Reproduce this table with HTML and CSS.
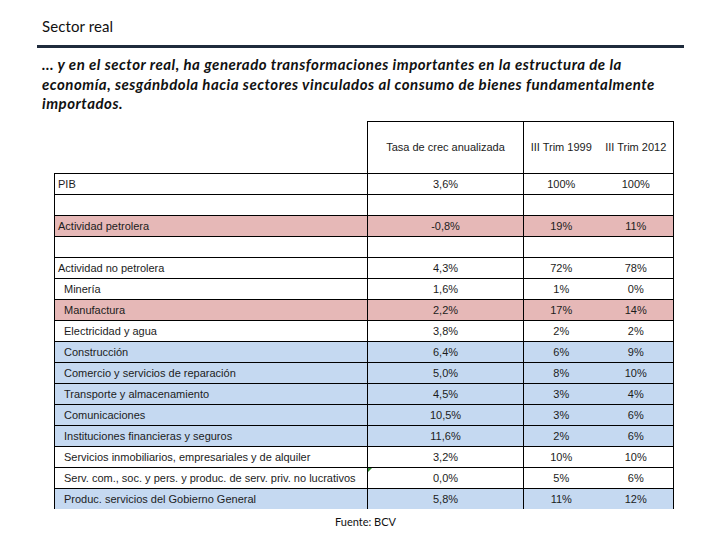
FILE: index.html
```html
<!DOCTYPE html>
<html lang="es">
<head>
<meta charset="utf-8">
<title>Sector real</title>
<link rel="stylesheet" href="styles.css">
</head>
<body>
<h1 class="title">Sector real</h1>
<div class="rule"></div>
<p class="lead">… y en el sector real, ha generado transformaciones importantes en la estructura de la economía, sesgánbdola hacia sectores vinculados al consumo de bienes fundamentalmente importados.</p>
<table class="data">
  <colgroup>
    <col class="c-label"><col class="c-tasa"><col class="c-y"><col class="c-y">
  </colgroup>
  <tr class="head">
    <td class="blank"></td>
    <td class="h-tasa">Tasa de crec anualizada</td>
    <td class="h-y1">III Trim 1999</td>
    <td class="h-y2">III Trim 2012</td>
  </tr>
  <tr class="main"><td class="lbl">PIB</td><td>3,6%</td><td class="y1">100%</td><td class="y2">100%</td></tr>
  <tr class="empty"><td></td><td></td><td class="y1"></td><td class="y2"></td></tr>
  <tr class="main pink"><td class="lbl">Actividad petrolera</td><td>-0,8%</td><td class="y1">19%</td><td class="y2">11%</td></tr>
  <tr class="empty"><td></td><td></td><td class="y1"></td><td class="y2"></td></tr>
  <tr class="main"><td class="lbl">Actividad no petrolera</td><td>4,3%</td><td class="y1">72%</td><td class="y2">78%</td></tr>
  <tr class="sub"><td class="lbl">Minería</td><td>1,6%</td><td class="y1">1%</td><td class="y2">0%</td></tr>
  <tr class="sub pink"><td class="lbl">Manufactura</td><td>2,2%</td><td class="y1">17%</td><td class="y2">14%</td></tr>
  <tr class="sub"><td class="lbl">Electricidad y agua</td><td>3,8%</td><td class="y1">2%</td><td class="y2">2%</td></tr>
  <tr class="sub blue"><td class="lbl">Construcción</td><td>6,4%</td><td class="y1">6%</td><td class="y2">9%</td></tr>
  <tr class="sub blue"><td class="lbl">Comercio y servicios de reparación</td><td>5,0%</td><td class="y1">8%</td><td class="y2">10%</td></tr>
  <tr class="sub blue"><td class="lbl">Transporte y almacenamiento</td><td>4,5%</td><td class="y1">3%</td><td class="y2">4%</td></tr>
  <tr class="sub blue"><td class="lbl">Comunicaciones</td><td>10,5%</td><td class="y1">3%</td><td class="y2">6%</td></tr>
  <tr class="sub blue"><td class="lbl">Instituciones financieras y seguros</td><td>11,6%</td><td class="y1">2%</td><td class="y2">6%</td></tr>
  <tr class="sub"><td class="lbl">Servicios inmobiliarios, empresariales y de alquiler</td><td>3,2%</td><td class="y1">10%</td><td class="y2">10%</td></tr>
  <tr class="sub"><td class="lbl">Serv. com., soc. y pers. y produc. de serv. priv. no lucrativos</td><td class="flag">0,0%</td><td class="y1">5%</td><td class="y2">6%</td></tr>
  <tr class="sub blue last"><td class="lbl">Produc. servicios del Gobierno General</td><td>5,8%</td><td class="y1">11%</td><td class="y2">12%</td></tr>
</table>
<p class="source">Fuente: BCV</p>
</body>
</html>
```
FILE: styles.css
```css
html, body {
  margin: 0;
  padding: 0;
  background: #fff;
}

body {
  width: 720px;
  height: 540px;
  overflow: hidden;
  font-family: "Lato", "Open Sans", sans-serif;
  color: #111;
}

.title {
  margin: 17px 0 0 42px;
  font-size: 15px;
  line-height: 18px;
  font-weight: normal;
  letter-spacing: 0.1px;
  color: #111;
}

.rule {
  margin: 10px 0 0 37px;
  width: 647px;
  height: 3px;
  background: #1f2b3c;
}

.lead {
  margin: 7px 0 0 42px;
  width: 640px;
  font-size: 15px;
  line-height: 19.5px;
  letter-spacing: 0.5px;
  font-style: italic;
  font-weight: bold;
  color: #111;
}

.data {
  margin: 7px 0 0 54px;
  border-collapse: collapse;
  table-layout: fixed;
  width: 620px;
  font-family: "Liberation Sans", Arial, sans-serif;
  font-size: 11px;
  color: #1c1c1c;
}

.c-label { width: 313px; }
.c-tasa { width: 156px; }
.c-y { width: 75px; }

.data td {
  height: 20px;
  padding: 0;
  border: 1px solid #000;
  text-align: center;
  line-height: 12px;
  white-space: nowrap;
  overflow: hidden;
}

.data td.y1 { border-right: none; }
.data td.y2 { border-left: none; }

.data .head td {
  height: 51px;
  padding-top: 0;
}

.data .head td.blank {
  border-top: none;
  border-left: none;
  border-right: 1px solid #000;
}

.data .head td.h-y1 { border-right: none; }
.data .head td.h-y2 { border-left: none; }

.data td.lbl {
  text-align: left;
  padding-left: 3px;
}

.data .sub td.lbl {
  padding-left: 9px;
}

.data .pink td { background: #e6b8b7; }
.data .blue td { background: #c5d9f1; }

.data .last td { border-bottom: none; }

.data td.flag {
  position: relative;
}

.data td.flag::before {
  content: "";
  position: absolute;
  left: 0;
  top: 0;
  border-top: 4px solid #2f8a2f;
  border-right: 4px solid transparent;
}

.source {
  margin: 6px 0 0 335px;
  font-size: 11px;
  line-height: 14px;
  color: #111;
}
```
